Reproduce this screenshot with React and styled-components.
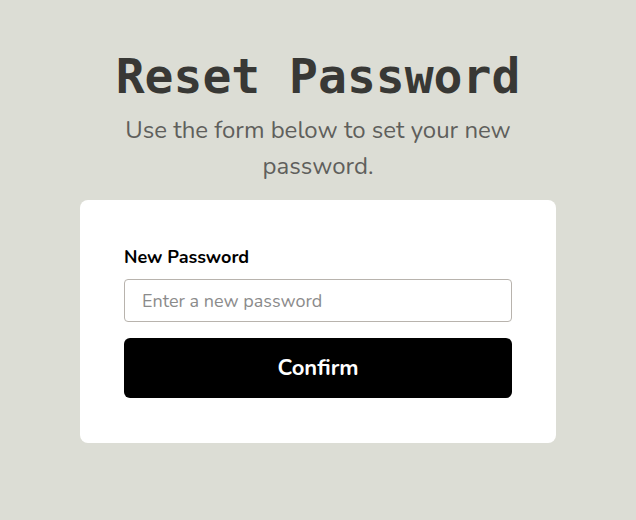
import React, { useState } from "react";
import styled, { createGlobalStyle } from "styled-components";

const BG = "#dcddd5";

const GlobalStyle = createGlobalStyle`
  html, body {
    margin: 0;
    padding: 0;
    background: ${BG};
  }
  body {
    font-family: "Nunito", "Open Sans", "Noto Sans", sans-serif;
  }
`;

const Page = styled.div`
  min-height: 520px;
  display: flex;
  flex-direction: column;
  align-items: center;
  padding-top: 46px;
  box-sizing: border-box;
`;

const Title = styled.h1`
  margin: 0;
  font-family: "DejaVu Sans Mono", "Liberation Mono", monospace;
  font-size: 48px;
  font-weight: 700;
  line-height: 60px;
  color: #383835;
  letter-spacing: 0;
`;

const Subtitle = styled.p`
  margin: 6px 0 16px;
  max-width: 420px;
  text-align: center;
  font-size: 24px;
  line-height: 36px;
  color: #5f5f5c;
`;

const Card = styled.form`
  width: 476px;
  box-sizing: border-box;
  background: #fff;
  border-radius: 8px;
  padding: 44px 44px 45px;
  display: flex;
  flex-direction: column;
`;

const Label = styled.label`
  font-size: 18px;
  font-weight: 700;
  line-height: 26px;
  color: #000;
  margin-bottom: 9px;
`;

const Input = styled.input`
  height: 43px;
  box-sizing: border-box;
  border: 1px solid #b8b3ad;
  border-radius: 4px;
  padding: 0 17px;
  font-family: inherit;
  font-size: 18px;
  color: #333;
  outline: none;
  margin-bottom: 16px;
  &::placeholder {
    color: #8b8b8b;
  }
`;

const Button = styled.button`
  height: 60px;
  border: none;
  border-radius: 6px;
  background: #000;
  color: #fff;
  font-family: inherit;
  font-size: 22px;
  font-weight: 700;
  cursor: pointer;
`;

const App = () => {
  const [password, setPassword] = useState("");
  const handleSubmit = (event) => {
    event.preventDefault();
  };
  return (
    <>
      <GlobalStyle />
      <Page>
        <Title>Reset Password</Title>
        <Subtitle>Use the form below to set your new password.</Subtitle>
        <Card onSubmit={handleSubmit}>
          <Label htmlFor="new-password">New Password</Label>
          <Input
            id="new-password"
            type="password"
            placeholder="Enter a new password"
            value={password}
            onChange={({ target: { value } }) => setPassword(value)}
          />
          <Button type="submit">Confirm</Button>
        </Card>
      </Page>
    </>
  );
};

export default App;
